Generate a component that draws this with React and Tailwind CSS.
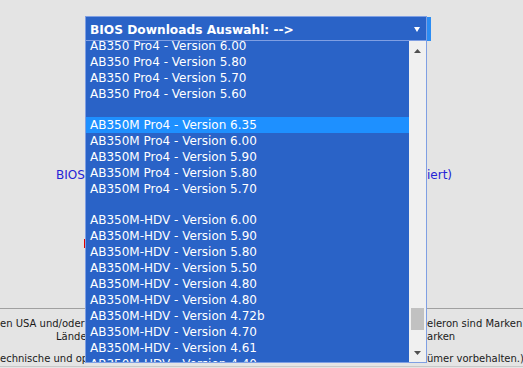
import React from 'react';

const options = [
  'AB350 Pro4 - Version 6.00',
  'AB350 Pro4 - Version 5.80',
  'AB350 Pro4 - Version 5.70',
  'AB350 Pro4 - Version 5.60',
  null,
  'AB350M Pro4 - Version 6.35',
  'AB350M Pro4 - Version 6.00',
  'AB350M Pro4 - Version 5.90',
  'AB350M Pro4 - Version 5.80',
  'AB350M Pro4 - Version 5.70',
  null,
  'AB350M-HDV - Version 6.00',
  'AB350M-HDV - Version 5.90',
  'AB350M-HDV - Version 5.80',
  'AB350M-HDV - Version 5.50',
  'AB350M-HDV - Version 4.80',
  'AB350M-HDV - Version 4.80',
  'AB350M-HDV - Version 4.72b',
  'AB350M-HDV - Version 4.70',
  'AB350M-HDV - Version 4.61',
  'AB350M-HDV - Version 4.40',
];

function FooterLine({ left, leftPad = '', right, className = '' }) {
  return (
    <div className={`flex whitespace-nowrap text-[10px] leading-[13px] text-[#1a1a1a] ${className}`}>
      <span className={`w-[85px] shrink-0 ${leftPad}`}>{left}</span>
      <span className="ml-[342px]">{right}</span>
    </div>
  );
}

function BiosSelect() {
  return (
    <div className="absolute left-[85px] top-[16px] w-[342px]">
      {/* closed select */}
      <div className="relative flex h-[25px] items-center border border-[#7f9fe3] bg-[#2a63c7] pl-[4px] pt-[3px] text-[12.2px] font-bold leading-[16px] text-white">
        <span className="whitespace-nowrap">BIOS Downloads Auswahl: --&gt;</span>
        <svg className="ml-auto mr-[6px] mb-[2px]" width="6" height="5" viewBox="0 0 6 5">
          <polygon points="0,0 6,0 3,5" fill="#ffffff" />
        </svg>
        <div className="absolute left-[341px] top-0 h-[24px] w-[4px] bg-[#2b8cf3]" />
      </div>

      {/* open list, scrolled a little */}
      <div className="flex h-[322px] border-x border-b border-[#7f9fe3]">
        <div className="flex-1 overflow-hidden bg-[#2a63c7] text-[12px] text-white">
          <div className="-mt-[3px]">
            {options.map((o, i) =>
              o === null ? (
                <div key={i} className="h-[15px]" />
              ) : (
                <div
                  key={i}
                  className={`h-[16px] whitespace-nowrap pl-[4px] leading-[16px] ${
                    i === 5 ? 'bg-[#1e90ff]' : ''
                  }`}
                >
                  {o}
                </div>
              )
            )}
          </div>
        </div>
        <div className="flex w-[17px] flex-col bg-[#f0f0f0]">
          <div className="flex h-[19px] items-center justify-center">
            <svg width="7" height="4" viewBox="0 0 7 4">
              <polygon points="3.5,0 7,4 0,4" fill="#505050" />
            </svg>
          </div>
          <div className="mx-[2px] mt-[248px] h-[22px] bg-[#c1c1c1]" />
          <div className="mt-auto flex h-[19px] items-center justify-center">
            <svg width="7" height="4" viewBox="0 0 7 4">
              <polygon points="0,0 7,0 3.5,4" fill="#505050" />
            </svg>
          </div>
        </div>
      </div>
    </div>
  );
}

export default function App() {
  return (
    <div
      className="relative h-[368px] w-[523px] overflow-hidden bg-[#e4e4e4]"
      style={{ fontFamily: '"DejaVu Sans", Verdana, sans-serif' }}
    >
      <div className="pt-[168px]">
        <div className="flex whitespace-nowrap text-[12px] leading-[14px] text-[#2323d6]">
          <span className="ml-[56px] w-[29px] shrink-0">BIOS</span>
          <span className="ml-[342px]">iert)</span>
        </div>
        <div className="ml-[84px] mt-[57px] h-[9px] w-px bg-[#e00000]" />
        <div className="mt-[60px] border-t border-[#a0a0a0]" />
        <FooterLine className="mt-[8px]" left="en USA und/oder" right="eleron sind Marken" />
        <FooterLine leftPad="pl-[56px]" left="Länder" right="arken" />
        <FooterLine className="mt-[9px]" left="echnische und op" right="ümer vorbehalten.)" />
        <div className="mt-[1px] border-t border-[#c8c8c8]" />
      </div>
      <BiosSelect />
    </div>
  );
}
